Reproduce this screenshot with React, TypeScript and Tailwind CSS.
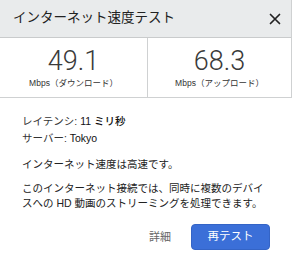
const jp = '"Liberation Sans", "Noto Sans CJK JP", sans-serif';

function CloseIcon() {
  return (
    <svg width="12" height="12" viewBox="0 0 12 12" className="block">
      <path d="M1.5 1.5 L10.5 10.5 M10.5 1.5 L1.5 10.5" stroke="#222" strokeWidth="1.7" strokeLinecap="round" />
    </svg>
  );
}

function Stat({ value, label }: { value: string; label: string }) {
  return (
    <div className="flex flex-col items-center border-r border-[#cfd1d2] pt-[9px] pb-[8px]">
      <div className="text-[27px] leading-[29px] font-light text-[#3a3a3a]" style={{ fontFamily: '"Roboto", "Liberation Sans", sans-serif' }}>
        {value}
      </div>
      <div className="text-[8.5px] leading-[12px] text-[#333] mt-[1px]">{label}</div>
    </div>
  );
}

export default function App() {
  return (
    <div className="w-[292px] h-[262px] bg-white overflow-hidden" style={{ fontFamily: jp }}>
      <div className="border-r border-[#cfd1d2]">
        <div className="h-[38px] bg-[#e9ebec] border-b border-[#c9cbcc] flex items-center justify-between pl-[13px] pr-[10px]">
          <span className="text-[13.5px] text-[#222]">インターネット速度テスト</span>
          <CloseIcon />
        </div>
      </div>
      <div className="grid grid-cols-[148px_1fr] border-b border-[#cfd1d2] h-[60px]">
        <Stat value="49.1" label="Mbps（ダウンロード）" />
        <Stat value="68.3" label="Mbps（アップロード）" />
      </div>
      <div className="px-[22px] pt-[15px] text-[10.5px] text-[#333] whitespace-nowrap">
        <div className="leading-[16.5px]">
          レイテンシ: <span className="font-medium text-[#111]">11 ミリ秒</span>
        </div>
        <div className="leading-[16.5px]">
          サーバー: <span className="font-medium text-[#111]">Tokyo</span>
        </div>
        <p className="leading-[16px] mt-[10px] text-[#222]">インターネット速度は高速です。</p>
        <p className="leading-[15px] mt-[9px] text-[#222]">
          このインターネット接続では、同時に複数のデバイ
          <br />
          スへの HD 動画のストリーミングを処理できます。
        </p>
        <div className="flex items-center justify-end gap-[20px] mt-[13px]">
          <button className="text-[11px] text-[#666]">詳細</button>
          <button className="w-[79px] h-[26px] rounded-[4px] bg-[#3b6fd8] border border-[#3464c6] text-white text-[11.5px]">
            再テスト
          </button>
        </div>
      </div>
    </div>
  );
}
